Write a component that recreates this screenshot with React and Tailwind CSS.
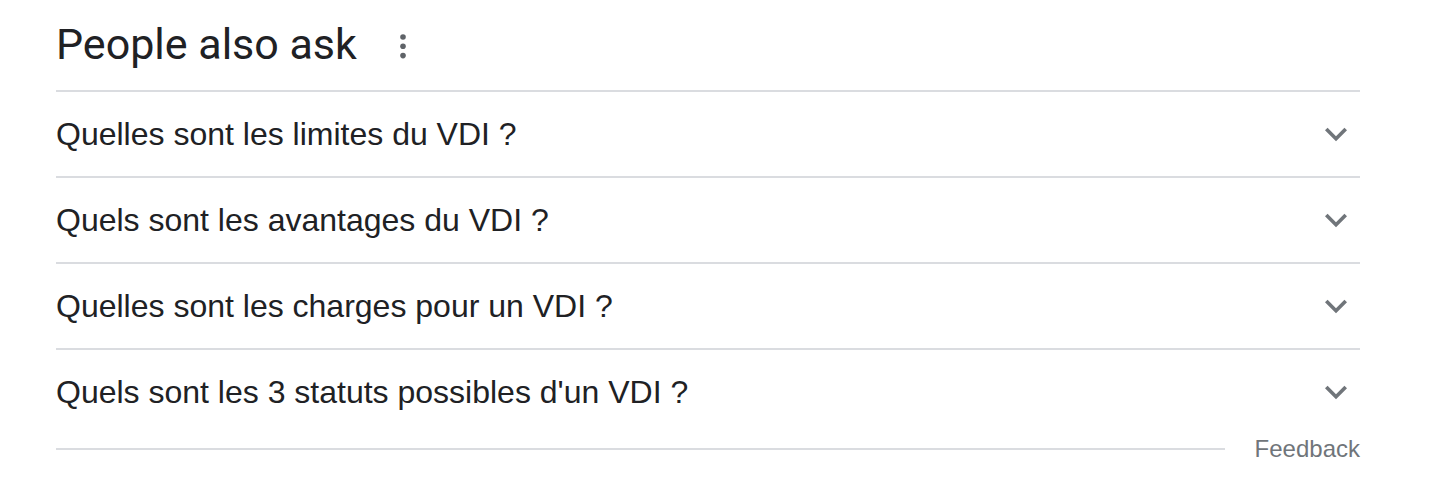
import React from "react";

const questions = [
  "Quelles sont les limites du VDI ?",
  "Quels sont les avantages du VDI ?",
  "Quelles sont les charges pour un VDI ?",
  "Quels sont les 3 statuts possibles d'un VDI ?",
];

function Chevron() {
  return (
    <svg width="44" height="44" viewBox="0 0 24 24" className="fill-[#70757a]">
      <path d="M16.59 8.59L12 13.17 7.41 8.59 6 10l6 6 6-6z" />
    </svg>
  );
}

function MoreDots() {
  return (
    <svg width="8" height="28" viewBox="0 0 8 28" className="fill-[#5f6368]">
      <circle cx="4" cy="4" r="2.8" />
      <circle cx="4" cy="13.3" r="2.8" />
      <circle cx="4" cy="22.6" r="2.8" />
    </svg>
  );
}

export default function App() {
  return (
    <div className="w-[1434px] h-[490px] bg-white pl-[56px] pr-[74px] font-['Liberation_Sans',Arial,sans-serif]">
      <div className="h-[90px] pt-[22px] flex items-start">
        <h2 className="text-[43px] leading-[44px] text-[#202124] font-['Roboto',sans-serif]">
          People also ask
        </h2>
        <div className="ml-[42px] mt-[11px]">
          <MoreDots />
        </div>
      </div>

      {questions.map((q) => (
        <div
          key={q}
          className="h-[86px] border-t-2 border-[#dadce0] flex items-center justify-between pr-[2px]"
        >
          <span className="text-[32px] text-[#202124]">{q}</span>
          <Chevron />
        </div>
      ))}

      <div className="h-[30px] flex items-center">
        <div className="flex-1 h-[2px] bg-[#dadce0]" />
        <span className="ml-[30px] text-[24px] text-[#70757a]">Feedback</span>
      </div>
    </div>
  );
}
